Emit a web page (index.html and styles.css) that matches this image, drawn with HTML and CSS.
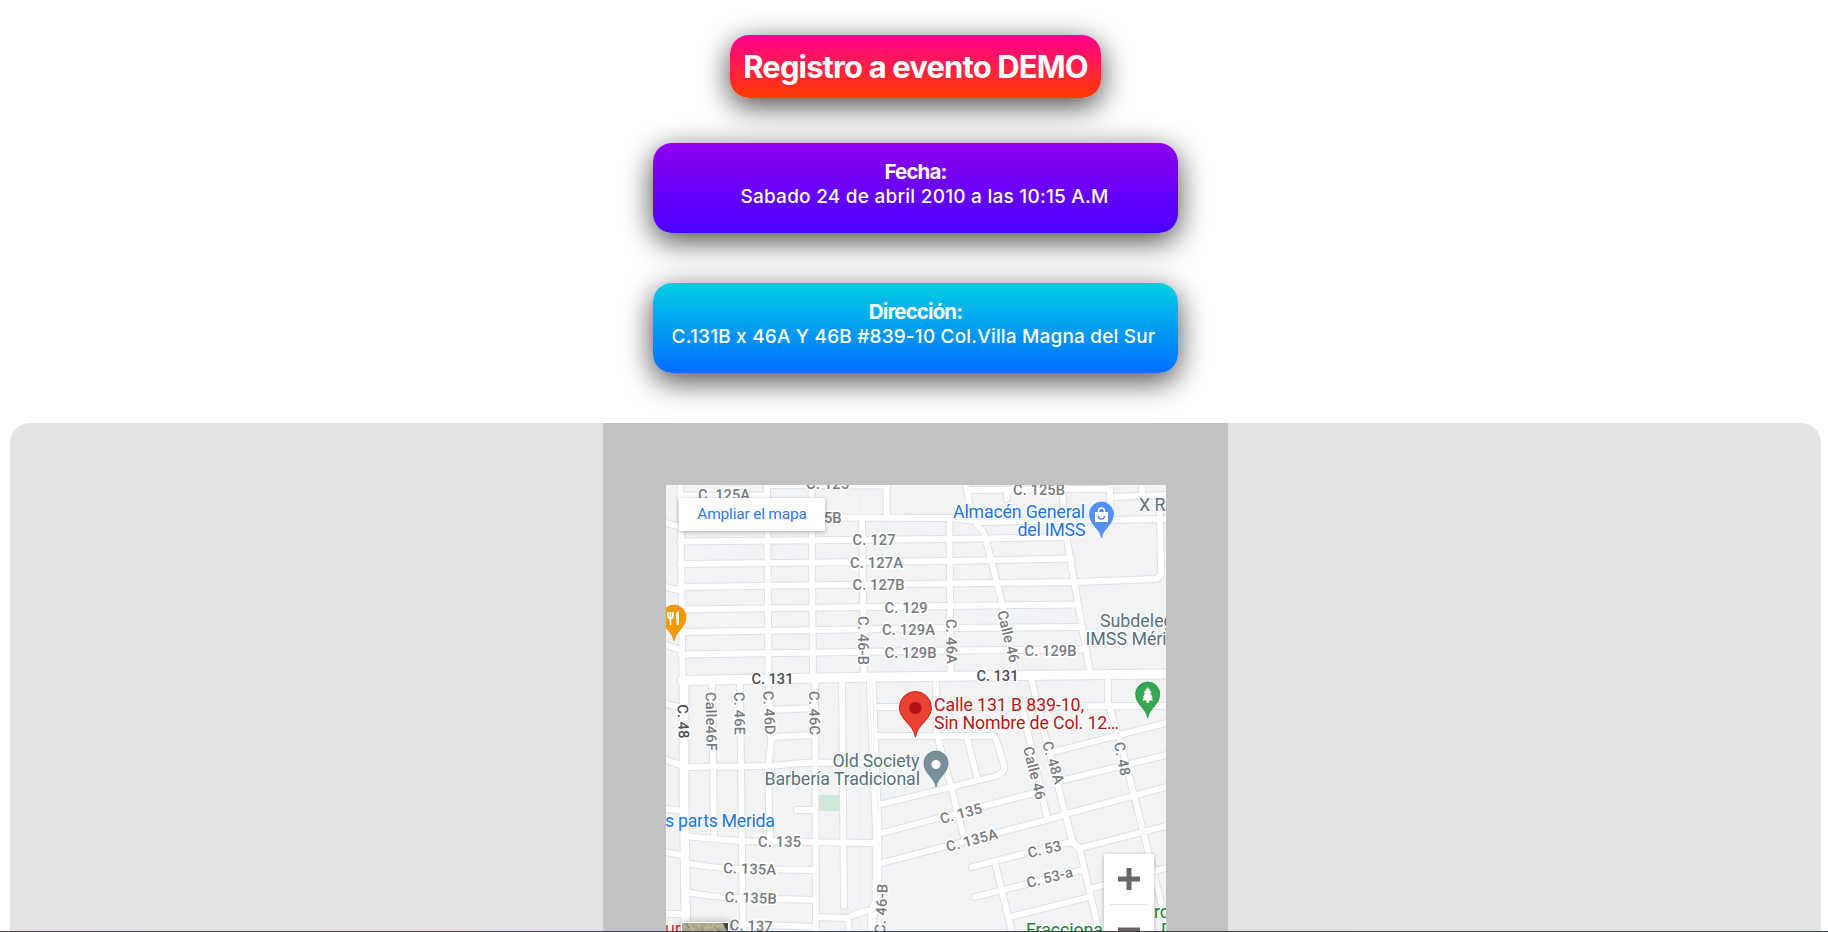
FILE: index.html
```html
<!DOCTYPE html>
<html lang="es">
<head>
<meta charset="utf-8">
<title>Registro a evento DEMO</title>
<link rel="stylesheet" href="styles.css">
</head>
<body>
<header class="intro">
  <h1 class="card title"><span>Registro a evento DEMO</span></h1>
  <section class="card info date">
    <h2 class="label label-date">Fecha:</h2>
    <p class="text text-date">Sabado 24 de abril 2010 a las 10:15 A.M</p>
  </section>
  <section class="card info address">
    <h2 class="label label-address">Dirección:</h2>
    <p class="text text-address">C.131B x 46A Y 46B #839-10 Col.Villa Magna del Sur</p>
  </section>
</header>
<main class="location">
  <div class="map-frame">
    <div class="map">
      <svg class="streets" viewBox="0 0 500 447" width="500" height="447">
        <defs>
          <g id="minor">
            <path d="M14.5 0L16.5 192M101 0L102.5 192M145.5 0L147 192M196 33L198 192M220.5 0V31M283.5 33L284.5 190M300 0L305 28Q308 38 314 43Q318 46 320 55L337 122L349 188M396.500 5L398 40L401 55L424 188M444 0V35M476 0V10M341 8V14M494 28L495 86Q495 93 489 94"/>
            <path d="M15 10.500H101M101 0L221 0.500M15 32L283 33L318 37L500 34M302 5L444 4M446 12L500 10M14 56.500L284 54L400 52M14 79L284 76L406 73.500M14 102L284 98.500L412 97L490 94M15 124.500L284 121L411 119.500M15 147L284 143L417 142M15 169.500L284 165.500L420 164.500"/>
            <path d="M0 38L15 42M0 102L15 106M0 160L15 165M0 219L17 223M0 275L17 281M0 324L18 326M0 367L19 371M0 429H20"/>
            <path d="M46 196L48 352M74 196L77 447M102 196L106 248L102 285L104 355M149 195L150 447M176 194L178 421M104 225L149 223M105 252L150 250M17 282L105 281Q128 278 150 277.500L210 279M131 325H149M19 351Q45 354 74 356L207 358M20 378Q45 383 75 384L150 385M20 407Q45 412 75 413L150 415M77 439L150 442M150 432L181 433Q194 426 208 425M182 433L183 447"/>
            <path d="M270 195L271 250L284 298L298 352M212 222L500 221M212 251H326Q328 250 330 254L338 280Q340 287 330 291L212 320M301 253L311 292M212 349L368 308M212 379L381 335L400 329L500 302M387 267L500 238M394 296L500 270M306 382L404 357L415 363L500 341M309 412L416 385M344 432L423 412M427 403L500 383M329 378L346 447"/>
            <path d="M356 222L381 332M365.500 195L381 258L406 355L414 365L433 447M442 195V218L454 255L481 362L501 440"/>
          </g>
          <g id="major">
            <path d="M16 195.500L214 192L500 189"/>
          </g>
          <g id="avenue">
            <path d="M18 198V308L20 447M205 192L209 290L211 340V415Q204 430 207 447"/>
          </g>
          <path id="pin" d="M0 0C-1.500-10-12-13-12-24A12 12 0 0 1 12-24C12-13 1.500-10 0 0Z"/>
        </defs>
        <rect class="land" width="500" height="447"/>
        <path class="seam" d="M193 0V447"/>
        <rect class="park" x="153" y="310" width="21" height="16"/>
        <use href="#minor" class="casing casing-minor"/>
        <use href="#major" class="casing casing-major"/>
        <use href="#avenue" class="casing casing-avenue"/>
        <use href="#minor" class="road road-minor"/>
        <use href="#major" class="road road-major"/>
        <use href="#avenue" class="road road-avenue"/>
        <path class="median" d="M203.500 198L206 270M207 198L208 270M210 270L212 330"/>

        <g class="street">
          <text x="32" y="15" textLength="52">C. 125A</text>
          <text x="140" y="4" textLength="43">C. 125</text>
          <text x="158" y="37.500">5B</text>
          <text x="186.500" y="60" textLength="43">C. 127</text>
          <text x="184" y="82.500" textLength="53">C. 127A</text>
          <text x="186.500" y="105" textLength="52">C. 127B</text>
          <text x="218.500" y="127.500" textLength="43">C. 129</text>
          <text x="216" y="150" textLength="53">C. 129A</text>
          <text x="218.500" y="172.500" textLength="52">C. 129B</text>
          <text x="347" y="10" textLength="52">C. 125B</text>
          <text x="358.500" y="170.500" textLength="52">C. 129B</text>
          <text transform="translate(192 131) rotate(90)" textLength="49">C. 46-B</text>
          <text transform="translate(280 134) rotate(89)" textLength="45">C. 46A</text>
          <text transform="translate(331 127) rotate(76)" textLength="53">Calle 46</text>
          <text transform="translate(39.500 207) rotate(89)" textLength="59">Calle46F</text>
          <text transform="translate(68 207) rotate(89)" textLength="43">C. 46E</text>
          <text transform="translate(97 206) rotate(87)" textLength="44">C. 46D</text>
          <text transform="translate(143 206) rotate(89)" textLength="44">C. 46C</text>
          <text transform="translate(357 263) rotate(76)" textLength="54">Calle 46</text>
          <text transform="translate(376 258) rotate(73)" textLength="44">C. 48A</text>
          <text transform="translate(448 258) rotate(79)" textLength="34">C. 48</text>
          <text transform="translate(219 449) rotate(-87)" textLength="50">C. 46-B</text>
          <text x="92" y="362" textLength="43">C. 135</text>
          <text transform="translate(57 388) rotate(2)" textLength="53">C. 135A</text>
          <text transform="translate(58.500 417) rotate(2)" textLength="52">C. 135B</text>
          <text transform="translate(63.500 445) rotate(2)" textLength="43">C. 137</text>
          <text transform="translate(275.500 339) rotate(-15)" textLength="43">C. 135</text>
          <text transform="translate(281.500 367) rotate(-15)" textLength="53">C. 135A</text>
          <text transform="translate(363 373) rotate(-13)" textLength="34">C. 53</text>
          <text transform="translate(362 403) rotate(-14)" textLength="47">C. 53-a</text>
        </g>
        <g class="street primary">
          <text x="85.500" y="198.500" textLength="42">C. 131</text>
          <text x="310.500" y="196" textLength="42">C. 131</text>
          <text transform="translate(11.500 219.500) rotate(88)" textLength="34">C. 48</text>
        </g>

        <g class="poi blue">
          <text x="287" y="33" textLength="132">Almacén General</text>
          <text x="351.500" y="50.500" textLength="68">del IMSS</text>
          <text x="-1" y="342" textLength="110">s parts Merida</text>
        </g>
        <g class="poi slate">
          <text x="473" y="26">X Refaccionaria</text>
          <text x="434" y="142">Subdelegación</text>
          <text x="419.500" y="159.500">IMSS Mérida</text>
          <text x="166.500" y="282" textLength="87">Old Society</text>
          <text x="98.500" y="299.500" textLength="155.500">Barbería Tradicional</text>
        </g>
        <g class="poi red">
          <text x="268" y="226" textLength="150">Calle 131 B 839-10,</text>
          <text x="268" y="243.500" textLength="185">Sin Nombre de Col. 12…</text>
        </g>
        <g class="poi green">
          <text x="360" y="450.500" textLength="77">Fracciona</text>
          <text x="488" y="433">rdines</text>
          <text x="495" y="450.500">D</text>
        </g>
        <text class="poi tomato" x="-1" y="450">ur</text>

        <g transform="translate(8 156)">
          <use href="#pin" class="pin-orange"/>
          <path class="glyph-line" d="M-6-29V-25Q-6-22.500-3.500-22.500T-1-25V-29M-3.500-29V-16M3.500-16V-29"/>
          <path class="glyph" d="M2-22V-26Q2-29 5-30V-16H3.500V-22Z"/>
        </g>
        <g transform="translate(435.500 53)">
          <use href="#pin" class="pin-blue"/>
          <path class="glyph" d="M-6.500-26H6.500V-16H-6.500Z"/>
          <path class="glyph-line thin" d="M-3-25V-27A3 3 0 0 1 3-27V-25"/>
          <path class="smile" d="M-3-22A3 3 0 0 0 3-22"/>
        </g>
        <g transform="translate(481.700 233)">
          <use href="#pin" class="pin-green"/>
          <path class="glyph" d="M0-31L4-25H2.500L5-20.500H3.500L5.500-17.500H1.200V-15H-1.200V-17.500H-5.500L-3.500-20.500H-5L-2.500-25H-4Z"/>
        </g>
        <g transform="translate(270 302)">
          <use href="#pin" class="pin-slate"/>
          <circle class="glyph" cy="-22.500" r="4.500"/>
        </g>
        <g transform="translate(249.400 252)">
          <path class="pin-red" d="M0 0C-2-13-16-17-16-29.500A16 16 0 0 1 16-29.500C16-17 2-13 0 0Z"/>
          <circle class="pin-dot" cy="-29" r="6.200"/>
        </g>
      </svg>
      <a class="enlarge">Ampliar el mapa</a>
      <div class="satellite">
        <svg viewBox="0 0 46 9" width="46" height="9">
          <rect width="46" height="9" fill="#aaa58c"/>
          <path d="M0 5L8 2L13 9M15 0L21 7L27 1M31 0L34 9M24 5L43 2" stroke="#bbb59b" stroke-width="2" fill="none"/>
          <path d="M4 0L7 5M19 4L22 9M32 4L38 8M40 0L46 4M42 9L46 7" stroke="#8b8a73" stroke-width="1.500"/>
          <path d="M41 0H46V8L43 5Z" fill="#44463b"/>
        </svg>
      </div>
      <div class="zoom">
        <svg viewBox="0 0 50 78" width="50" height="78">
          <path d="M14 25H36M25 14V36M14 76H36" stroke="#666" stroke-width="5"/>
          <path d="M6 50.500H43" stroke="#e6e6e6"/>
        </svg>
      </div>
    </div>
  </div>
</main>
<div class="edge"></div>
</body>
</html>
```
FILE: styles.css
```css
* { box-sizing: border-box; }
html, body { height: 100%; }
body {
  margin: 0;
  height: 932px;
  overflow: hidden;
  display: flex;
  flex-direction: column;
  background: #fff;
  font-family: Inter, "Open Sans", sans-serif;
}
.intro {
  display: flex;
  flex-direction: column;
  align-items: center;
  padding: 35px 0 50px 3px;
}
.card {
  border-radius: 19px;
  color: #fff;
  text-align: center;
  white-space: nowrap;
  box-shadow: 0 8px 30px rgba(0, 0, 0, .72);
}
.title {
  width: 371px;
  height: 63px;
  margin: 0 0 45px;
  display: flex;
  align-items: center;
  justify-content: center;
  font-size: 31px;
  line-height: 40px;
  font-weight: 700;
  letter-spacing: -.87px;
  background: linear-gradient(#ff0090, #ff3c00);
}
.info {
  width: 525px;
  height: 90px;
  padding-top: 16px;
}
.date {
  margin-bottom: 50px;
  background: linear-gradient(#8e00ee, #4800ff);
}
.address { background: linear-gradient(#00cee2, #006eff); }
.label {
  margin: 0;
  font-size: 20.5px;
  line-height: 25px;
  font-weight: 700;
  letter-spacing: -.9px;
}
.text {
  margin: 0;
  font-size: 19px;
  line-height: 25px;
  font-weight: 500;
}
.text-date { padding-left: 18px; letter-spacing: .24px; }
.text-address { letter-spacing: .18px; padding-right: 4px; }
.location {
  flex: 1;
  min-height: 0;
  overflow: hidden;
  margin: 0 7px 0 10px;
  display: flex;
  justify-content: center;
  background: #e3e3e3;
  border-radius: 20px 20px 0 0;
}
.map-frame {
  width: 625px;
  padding: 62px 62px 0 63px;
  background: #c2c2c2;
}
.map {
  position: relative;
  width: 500px;
  height: 447px;
  overflow: hidden;
  font-family: Roboto, sans-serif;
}
.streets { display: block; }
.land { fill: #f1f3f5; }
.park { fill: #cde8d5; }
.seam { stroke: #e8eaed; stroke-width: .6; }
.casing, .road { fill: none; stroke-linecap: round; stroke-linejoin: round; }
.casing { stroke: #dcdfe4; }
.road { stroke: #fff; }
.casing-minor { stroke-width: 7.8; }
.road-minor { stroke-width: 5.8; }
.casing-major { stroke-width: 11; }
.road-major { stroke-width: 9; }
.casing-avenue { stroke-width: 10.5; }
.road-avenue { stroke-width: 8.5; }
.median { fill: none; stroke: #e4e6ea; stroke-width: .7; }
.street text {
  font-size: 14.7px;
  font-weight: 500;
  fill: #757a7f;
  stroke: #fff;
  stroke-width: 3px;
  stroke-linejoin: round;
  paint-order: stroke;
}
.street.primary text { fill: #4b4e53; }
.poi {
  font-size: 17.8px;
  stroke: #fff;
  stroke-width: 2.5px;
  stroke-linejoin: round;
  paint-order: stroke;
}
.blue { fill: #1a73e8; }
.slate { fill: #557080; }
.red { fill: #b81414; }
.green { fill: #188038; }
.tomato { fill: #d93025; }
.glyph { fill: #fff; }
.glyph-line { fill: none; stroke: #fff; stroke-width: 1.7; }
.thin { stroke-width: 1.4; }
.smile { fill: none; stroke: #4a8cf5; stroke-width: 1.4; }
.pin-orange { fill: #f29900; stroke: #e08a00; stroke-width: .7; }
.pin-blue { fill: #5491f5; stroke: #4285f4; stroke-width: .7; }
.pin-green { fill: #34a853; stroke: #1e8e3e; stroke-width: .8; }
.pin-slate { fill: #78909c; stroke: #607d8b; stroke-width: .8; }
.pin-red { fill: #ea4335; stroke: #c5221f; stroke-width: 1; }
.pin-dot { fill: #b31412; }
.enlarge {
  position: absolute;
  left: 13px;
  top: 13px;
  width: 146px;
  height: 33px;
  border-radius: 2px;
  background: #fff;
  box-shadow: 0 1px 4px rgba(0, 0, 0, .3);
  color: #3079ed;
  font-size: 15.5px;
  line-height: 32px;
  letter-spacing: -.2px;
  text-align: center;
}
.satellite {
  position: absolute;
  left: 15px;
  top: 437px;
  width: 48px;
  height: 20px;
  border: 1px solid #fff;
  border-radius: 2px;
  box-shadow: 0 1px 8px rgba(0, 0, 0, .4);
}
.satellite svg { display: block; }
.zoom {
  position: absolute;
  left: 438px;
  top: 369px;
  width: 50px;
  height: 100px;
  border-radius: 2px;
  background: #fff;
  box-shadow: 0 1px 4px rgba(0, 0, 0, .3);
}
.edge {
  position: absolute;
  left: 0;
  bottom: 0;
  width: 100%;
  height: 1px;
  background: linear-gradient(90deg, #5b3d4a, #533f4f 22%, #3d4654 38%, #443f4b 60%, #42444b);
}
```
